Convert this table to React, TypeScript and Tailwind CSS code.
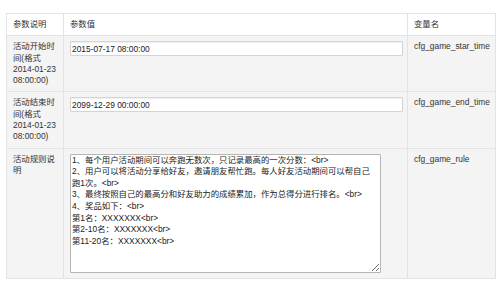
import React from 'react'

const font = { fontFamily: '"Liberation Sans", "Noto Sans CJK SC", sans-serif' }

const ruleText = `1、每个用户活动期间可以奔跑无数次，只记录最高的一次分数：<br>
2、用户可以将活动分享给好友，邀请朋友帮忙跑。每人好友活动期间可以帮自己跑1次。<br>
3、最终按照自己的最高分和好友助力的成绩累加，作为总得分进行排名。<br>
4、奖品如下：<br>
第1名：XXXXXXX<br>
第2-10名：XXXXXXX<br>
第11-20名：XXXXXXX<br>`

const rows = [
  { label: '活动开始时间(格式 2014-01-23 08:00:00)', value: '2015-07-17 08:00:00', name: 'cfg_game_star_time' },
  { label: '活动结束时间(格式 2014-01-23 08:00:00)', value: '2099-12-29 00:00:00', name: 'cfg_game_end_time' }
]

const cell = 'border border-[#e3e3e3] align-top pl-[6px] pr-[4px] py-[5px]'

export default function App() {
  return (
    <div className="w-[500px] h-[300px] bg-white pt-[13px] pl-[6px] text-[#333] text-[8.4px] leading-[11.3px]" style={font}>
      <table className="w-[489px] table-fixed border-collapse border border-[#e0e0e0]">
        <colgroup>
          <col className="w-[57px]" />
          <col className="w-[344px]" />
          <col className="w-[88px]" />
        </colgroup>
        <thead>
          <tr className="bg-white">
            <th className={`${cell} text-left font-normal h-[22px] align-middle`}>参数说明</th>
            <th className={`${cell} text-left font-normal align-middle`}>参数值</th>
            <th className={`${cell} text-left font-normal align-middle`}>变量名</th>
          </tr>
        </thead>
        <tbody>
          {rows.map(r => (
            <tr key={r.name} className="bg-[#f4f4f4]">
              <td className={`${cell} h-[56px]`}>{r.label}</td>
              <td className={cell}>
                <input
                  defaultValue={r.value}
                  className="w-full h-[15px] bg-white border border-[#d4d4d4] rounded-[1px] px-[1px] text-[8.4px] text-[#222] shadow-[inset_0_1px_1px_rgba(0,0,0,0.06)] outline-none"
                  style={font}
                />
              </td>
              <td className={cell}>{r.name}</td>
            </tr>
          ))}
          <tr className="bg-[#f4f4f4]">
            <td className={`${cell} h-[129px]`}>活动规则说明</td>
            <td className={cell}>
              <textarea
                defaultValue={ruleText}
                className="block w-[311px] h-[119px] bg-white border border-[#b5b5b5] rounded-[1px] pl-[1px] pr-[4px] py-0 text-[8.4px] leading-[11.6px] text-[#222] resize overflow-hidden outline-none"
                style={font}
              />
            </td>
            <td className={cell}>cfg_game_rule</td>
          </tr>
        </tbody>
      </table>
    </div>
  )
}
